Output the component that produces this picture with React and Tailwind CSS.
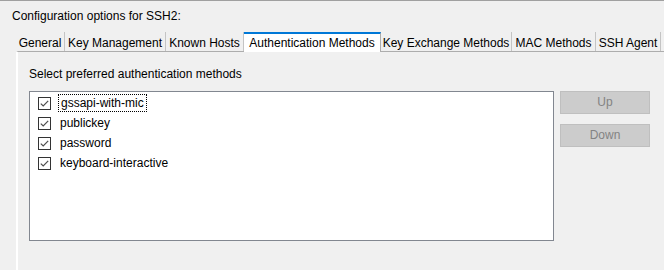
import React from "react";

// Tabs of the SSH2 options dialog, widths taken from the screenshot
const tabs = [
  { label: "General", width: "w-[49px]" },
  { label: "Key Management", width: "w-[101px]" },
  { label: "Known Hosts", width: "w-[78px]" },
  { label: "Authentication Methods", width: "w-[137px]", active: true },
  { label: "Key Exchange Methods", width: "w-[131px]" },
  { label: "MAC Methods", width: "w-[84px]" },
  { label: "SSH Agent", width: "w-[65px]" },
];

const methods = ["gssapi-with-mic", "publickey", "password", "keyboard-interactive"];

function CheckBox() {
  return (
    <span className="flex h-[13px] w-[13px] shrink-0 items-center justify-center border border-[#333333] bg-white">
      <svg width="11" height="11" viewBox="0 0 11 11">
        <path d="M1.8 5.6 L4.2 8 L9.2 2.8" stroke="#4d4d4d" strokeWidth="1.2" fill="none" />
      </svg>
    </span>
  );
}

export default function App() {
  return (
    <div className="h-[270px] w-[664px] overflow-hidden border-t border-[#a0a0a0] bg-[#f0f0f0] font-['Liberation_Sans',Arial,sans-serif] text-[12px] leading-[15px] text-black">
      {/* Header */}
      <div className="pl-[12px] pt-[7px] leading-[16px]">Configuration options for SSH2:</div>

      {/* Tab strip */}
      <div className="ml-[16px] mt-[8px] flex h-[19px]">
        {tabs.map((t) =>
          t.active ? (
            <div
              key={t.label}
              className={`relative z-10 flex h-[20px] shrink-0 items-end justify-center whitespace-nowrap border-r border-t-2 border-r-[#adadad] border-t-[#0078d7] bg-white pb-[1px] ${t.width}`}
            >
              {t.label}
            </div>
          ) : (
            <div
              key={t.label}
              className={`flex h-full shrink-0 items-end justify-center whitespace-nowrap border-r border-[#c4c4c4] ${t.width}`}
            >
              {t.label}
            </div>
          )
        )}
      </div>

      {/* Tab page */}
      <div className="ml-[16px] h-[300px] w-[700px] border-l-2 border-t border-l-white border-t-[#adadad] pl-[11px] pt-[15px]">
        <div>Select preferred authentication methods</div>

        <div className="mt-[9px] flex gap-[6px]">
          {/* Method list */}
          <div className="h-[150px] w-[525px] shrink-0 border border-[#828790] bg-white pl-[8px] pt-[1px]">
            {methods.map((m, i) => (
              <div key={m} className="flex h-[20px] items-center">
                <CheckBox />
                {i === 0 ? (
                  <span className="ml-[7px] flex h-[18px] items-center border border-dotted border-black px-[2px]">
                    {m}
                  </span>
                ) : (
                  <span className="ml-[9px]">{m}</span>
                )}
              </div>
            ))}
          </div>

          {/* Disabled buttons */}
          <div className="flex flex-col gap-[10px]">
            <div className="flex h-[23px] w-[90px] items-center justify-center border border-[#bfbfbf] bg-[#cccccc] text-[#838383]">
              Up
            </div>
            <div className="flex h-[23px] w-[90px] items-center justify-center border border-[#bfbfbf] bg-[#cccccc] text-[#838383]">
              Down
            </div>
          </div>
        </div>
      </div>
    </div>
  );
}
